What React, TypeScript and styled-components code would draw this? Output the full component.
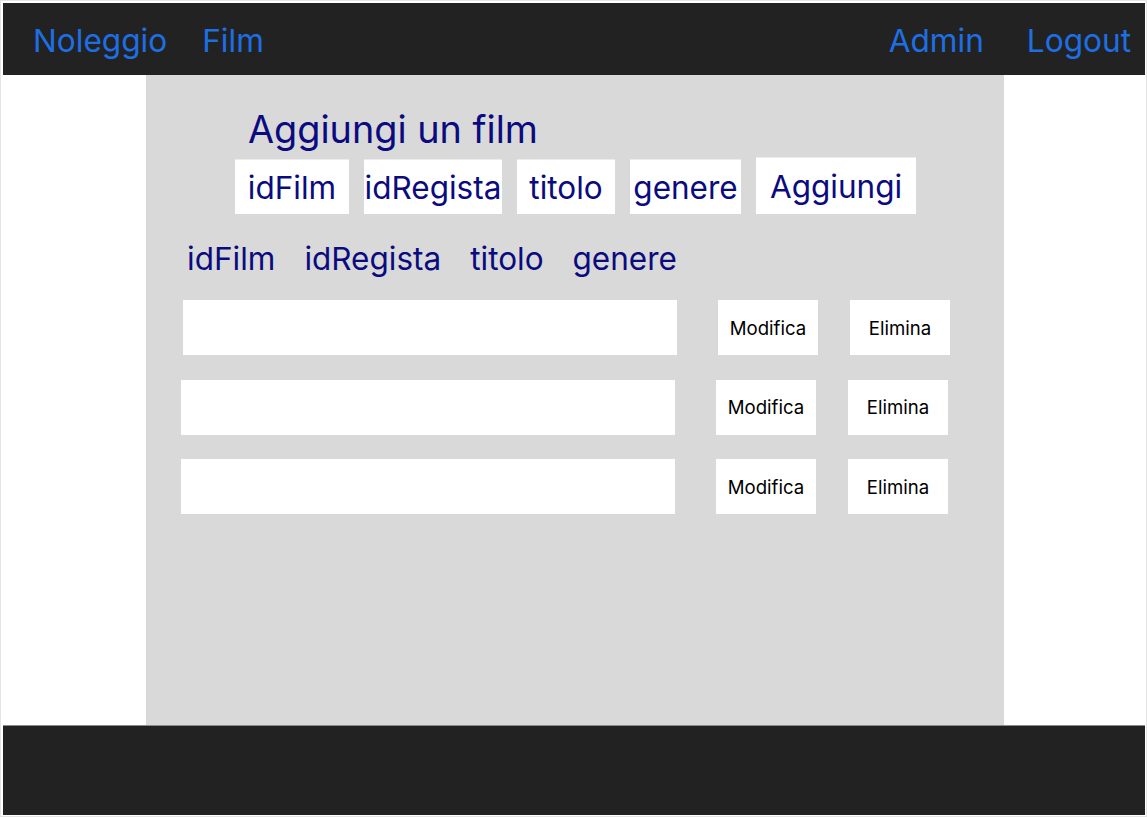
import React from "react";
import styled, { createGlobalStyle } from "styled-components";

const Global = createGlobalStyle`
  html, body { margin: 0; padding: 0; background: #ffffff; }
  body { font-family: Inter, "Noto Sans", sans-serif; }
`;

const Frame = styled.div`
  width: 1147px;
  height: 817px;
  box-sizing: border-box;
  padding: 2px 1px 1px 2px;
  display: flex;
  flex-direction: column;
  background: #ffffff;
  border: 1px solid #e4e4e4;
`;

const TopBar = styled.header`
  height: 72px;
  flex: none;
  box-sizing: border-box;
  background: #222222;
  display: flex;
  align-items: center;
  justify-content: space-between;
  padding: 4px 14px 0 30px;
`;

const NavGroup = styled.nav<{ $gap: number }>`
  display: flex;
  align-items: center;
  gap: ${(p) => p.$gap}px;
`;

const NavLink = styled.a`
  color: #1d6fe3;
  font-size: 31.6px;
  text-decoration: none;
  line-height: 1;
`;

const Middle = styled.div`
  flex: 1;
  display: flex;
`;

const Side = styled.div<{ $w: number }>`
  flex: none;
  width: ${(p) => p.$w}px;
  background: #ffffff;
`;

const Panel = styled.main`
  flex: none;
  width: 858px;
  background: #d9d9d9;
  padding: 32px 0 0 35px;
  box-sizing: border-box;
  color: #0b0b80;
`;

const Title = styled.h1`
  margin: 0 0 7px 67px;
  font-size: 37.8px;
  font-weight: 400;
  line-height: 44px;
`;

const FormRow = styled.div`
  display: flex;
  align-items: flex-end;
  gap: 15px;
  margin-left: 54px;
`;

const Field = styled.div<{ $w: number; $h?: number }>`
  width: ${(p) => p.$w}px;
  height: ${(p) => p.$h ?? 54}px;
  background: #ffffff;
  display: flex;
  align-items: center;
  justify-content: center;
  font-size: 31.5px;
  white-space: nowrap;
  box-shadow: 0 -1px 0 #ececec;
`;

const Headers = styled.div`
  display: flex;
  gap: 29px;
  margin: 26px 0 22px 6px;
  font-size: 31.5px;
  line-height: 38px;
`;

const List = styled.div`
  display: flex;
  flex-direction: column;
  gap: 24.5px;
`;

const Row = styled.div<{ $shift: number }>`
  display: flex;
  align-items: center;
  padding-left: ${(p) => p.$shift}px;
`;

const RowBox = styled.div`
  width: 494px;
  height: 55px;
  background: #ffffff;
`;

const ActionButton = styled.button<{ $ml: number }>`
  margin-left: ${(p) => p.$ml}px;
  width: 100px;
  height: 55px;
  border: none;
  background: #ffffff;
  color: #000000;
  font-family: Inter, "Noto Sans", sans-serif;
  font-size: 18.6px;
  padding: 0;
`;

const Footer = styled.footer`
  height: 90px;
  flex: none;
  box-sizing: border-box;
  background: #222222;
  border-top: 1px solid #8a8a8a;
`;

const rows = [2, 0, 0];

export default function App() {
  return (
    <>
      <Global />
      <Frame>
        <TopBar>
          <NavGroup $gap={35}>
            <NavLink>Noleggio</NavLink>
            <NavLink>Film</NavLink>
          </NavGroup>
          <NavGroup $gap={43}>
            <NavLink>Admin</NavLink>
            <NavLink>Logout</NavLink>
          </NavGroup>
        </TopBar>
        <Middle>
          <Side $w={143} />
          <Panel>
            <Title>Aggiungi un film</Title>
            <FormRow>
              <Field $w={114}>idFilm</Field>
              <Field $w={138}>idRegista</Field>
              <Field $w={98}>titolo</Field>
              <Field $w={111}>genere</Field>
              <Field $w={160} $h={56}>Aggiungi</Field>
            </FormRow>
            <Headers>
              <span>idFilm</span>
              <span>idRegista</span>
              <span>titolo</span>
              <span>genere</span>
            </Headers>
            <List>
              {rows.map((s, i) => (
                <Row key={i} $shift={s}>
                  <RowBox />
                  <ActionButton $ml={41}>Modifica</ActionButton>
                  <ActionButton $ml={32}>Elimina</ActionButton>
                </Row>
              ))}
            </List>
          </Panel>
          <Side $w={141} />
        </Middle>
        <Footer />
      </Frame>
    </>
  );
}
